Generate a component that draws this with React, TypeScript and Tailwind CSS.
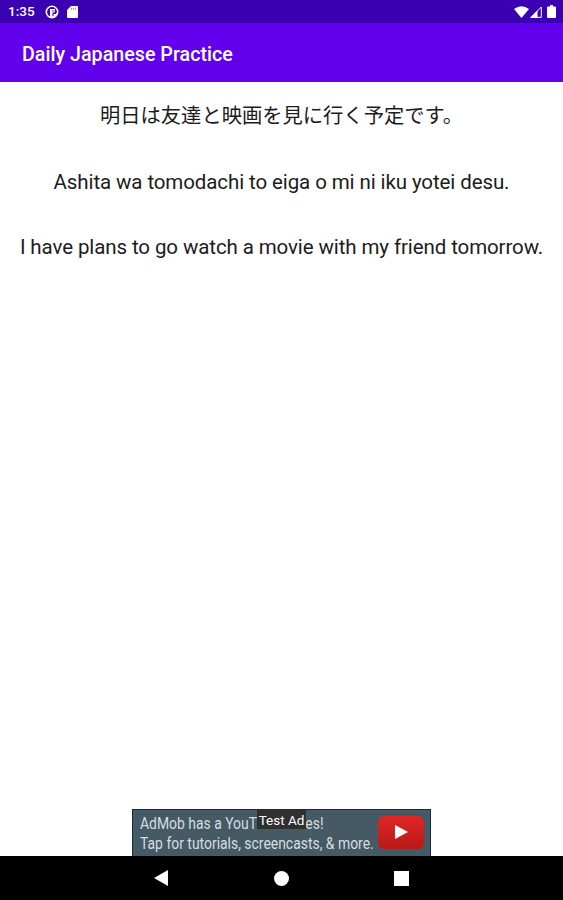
const StatusBar = () => {
  return (
    <div className="flex h-[23px] items-center bg-[#3a00b1] pr-[7px] pl-2 text-white">
      <span className="w-[37px] text-[13.5px] leading-none font-medium">
        1:35
      </span>
      <svg className="h-[14px] w-[14px]" viewBox="0 0 14 14" fill="none">
        <circle cx="7" cy="7" r="5.7" stroke="white" strokeWidth="1.6" />
        <path d="M5 4h5v3.500H7.500V12H5z" fill="white" />
        <path d="M7.500 8h4.500a5.500 5.500 0 0 1-4.500 5z" fill="white" />
        <path d="M7 6h2.500" stroke="#3a00b1" strokeWidth="0.800" />
        <path d="M8 8.500h3M8 8.500v2.500" stroke="#3a00b1" />
      </svg>
      <svg className="ml-2 h-3 w-[11px]" viewBox="0 0 11 12">
        <path
          d="M4 0h6a1 1 0 0 1 1 1v10a1 1 0 0 1-1 1H1a1 1 0 0 1-1-1V4z"
          fill="white"
        />
        <path d="M4.3 1.8v2M6.3 1.8v2M8.3 1.8v2" stroke="#9b80dc" />
      </svg>
      <div className="ml-auto flex items-center">
        <svg className="h-3 w-[15px]" viewBox="0 0 15 12">
          <path d="M0 3Q7.500-2.500 15 3L7.500 12z" fill="white" />
        </svg>
        <svg className="ml-px h-3 w-3" viewBox="0 0 12 12">
          <path d="M11.300 1v10.300H1z" stroke="white" fill="none" />
          <path d="M7.500 4.500V12H0z" fill="white" />
        </svg>
        <svg className="ml-[5px] h-[13px] w-[9px]" viewBox="0 0 9 13">
          <path
            d="M3 0h3v1.500h2a1 1 0 0 1 1 1V12a1 1 0 0 1-1 1H1a1 1 0 0 1-1-1V2.500a1 1 0 0 1 1-1h2z"
            fill="white"
          />
        </svg>
      </div>
    </div>
  );
};

const AdBanner = () => {
  return (
    <div className="relative mx-auto flex h-[47px] w-[299px] items-start border-x border-t border-[#12303c] bg-[#455a64]">
      <div className="ml-[7px] w-[238px] pt-[4px]">
        <div className="origin-left scale-x-[0.87] text-[16px] leading-5 whitespace-nowrap text-[#d5dde1]">
          <p>AdMob has a YouTube series!</p>
          <p>Tap for tutorials, screencasts, &amp; more.</p>
        </div>
      </div>
      <div className="mt-[6px] flex h-[33px] w-[46px] items-center justify-center rounded-md bg-linear-to-b from-[#df2825] to-[#b91719]">
        <svg className="mb-px h-[14px] w-[13px]" viewBox="0 0 13 14">
          <path d="M0 0l13 7-13 7z" fill="white" />
        </svg>
      </div>
      <span className="absolute top-0 left-[124px] flex h-[19px] w-[49px] items-center justify-center bg-[#303030] pt-px text-[13.5px] whitespace-nowrap text-white">
        Test Ad
      </span>
    </div>
  );
};

const NavigationBar = () => {
  return (
    <div className="flex h-11 items-center justify-center gap-[105px] bg-black">
      <svg className="h-4 w-[15px]" viewBox="0 0 15 16">
        <path d="M0 8L14 0v16z" fill="white" />
      </svg>
      <div className="h-[15px] w-[15px] rounded-full bg-white" />
      <div className="h-[15px] w-[15px] bg-white" />
    </div>
  );
};

const App = () => {
  return (
    <div className="flex h-[900px] w-[563px] flex-col overflow-hidden bg-white font-[Roboto,'Noto_Sans_CJK_JP',sans-serif]">
      <StatusBar />
      <header className="flex h-[59px] items-center bg-[#6200ee] pt-1 pl-[22px]">
        <h1 className="text-[19.7px] font-medium whitespace-nowrap text-white">
          Daily Japanese Practice
        </h1>
      </header>
      <main className="flex flex-1 flex-col items-center gap-[35.5px] pt-[19px] text-[20.5px] leading-[30px] whitespace-nowrap text-[#1c1c1c]">
        <p lang="ja" className="text-[20.3px]">
          明日は友達と映画を見に行く予定です。
        </p>
        <p className="tracking-[-0.1px]">
          Ashita wa tomodachi to eiga o mi ni iku yotei desu.
        </p>
        <p className="tracking-[-0.1px]">
          I have plans to go watch a movie with my friend tomorrow.
        </p>
      </main>
      <AdBanner />
      <NavigationBar />
    </div>
  );
};

export default App;
